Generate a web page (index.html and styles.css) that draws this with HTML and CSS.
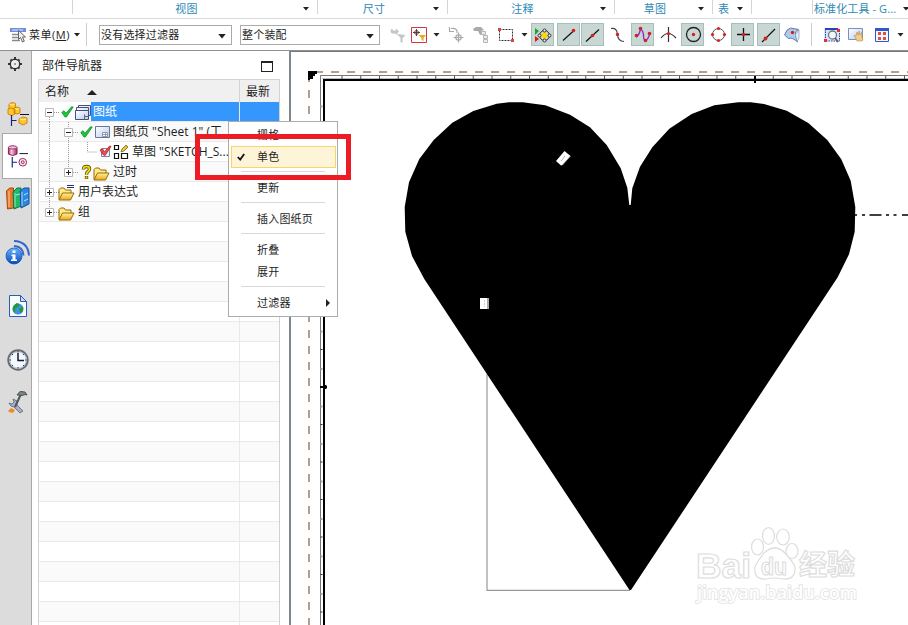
FILE: index.html
```html
<!DOCTYPE html>
<html lang="zh-CN">
<head>
<meta charset="utf-8">
<title>部件导航器</title>
<link rel="stylesheet" href="styles.css">
</head>
<body>
<svg class="defs" aria-hidden="true">
  <defs>
    <linearGradient id="gold" x1="0" y1="0" x2="0" y2="1"><stop offset="0" stop-color="#fff3a0"/><stop offset="1" stop-color="#eaa91c"/></linearGradient>
    <linearGradient id="sheetfill" x1="0" y1="0" x2="1" y2="1"><stop offset="0" stop-color="#fff"/><stop offset="1" stop-color="#b9cbee"/></linearGradient>
    <linearGradient id="blueball" x1="0" y1="0" x2="0" y2="1"><stop offset="0" stop-color="#68b5ff"/><stop offset="1" stop-color="#0847be"/></linearGradient>
    <linearGradient id="rose" x1="0" y1="0" x2="1" y2="0"><stop offset="0" stop-color="#a62a70"/><stop offset=".35" stop-color="#f5cde2"/><stop offset="1" stop-color="#a3225f"/></linearGradient>
    <symbol id="minus" viewBox="0 0 9 9"><path d="M.5.5h8v8h-8z" fill="#fff" stroke="#b8b8b8"/><path d="M2 4.500h5" stroke="#222"/></symbol>
    <symbol id="plus" viewBox="0 0 9 9"><path d="M.5.5h8v8h-8z" fill="#fff" stroke="#b8b8b8"/><path d="M2 4.500h5M4.500 2v5" stroke="#222"/></symbol>
    <symbol id="tick" viewBox="0 0 13 12"><path d="M.8 6.500 3 4.700l2 2.600L10.500.8l1.700.2-6.800 10L4 11Z" fill="#1cc83c" stroke="#07912a" stroke-width=".8"/></symbol>
    <symbol id="folder" viewBox="0 0 17 14"><path d="M1 12.500V2.500L2.500 1H6l1.500 2H13v3" fill="#ffe98a" stroke="#9a6a00"/><path d="M1 13 4.500 6h11.500L12.500 13Z" fill="url(#gold)" stroke="#9a6a00"/></symbol>
    <symbol id="caret" viewBox="0 0 6 4"><path d="M0 0h6L3 3.500Z" fill="#222"/></symbol>
  </defs>
</svg>
<div class="app">
  <nav class="ribbon">
    <div class="group"></div>
    <div class="group"><span>视图</span><svg class="caret"><use href="#caret"/></svg></div>
    <div class="group"><span>尺寸</span><svg class="caret"><use href="#caret"/></svg></div>
    <div class="group"><span>注释</span><svg class="caret"><use href="#caret"/></svg></div>
    <div class="group"><span>草图</span><svg class="caret"><use href="#caret"/></svg></div>
    <div class="group tight"><span>表</span><svg class="caret"><use href="#caret"/></svg></div>
    <div class="group"></div>
    <div class="group last"><span>标准化工具 - G...</span><svg class="caret"><use href="#caret"/></svg></div>
  </nav>

  <div class="toolbar">
    <div class="menu-button">
      <svg width="17" height="16" viewBox="10 27 17 16"><path d="M10 28h16v4H10z" fill="#6f8ee0"/><path d="M12 30h11" stroke="#dce6ff"/><path d="M12 34.500h9M12 37.500h7M12 40.500h8" stroke="#8a8a8a" stroke-width="1.400"/><path d="M18.500 30.500v9l2-2 2 4.500 1.800-.8-1.800-4.200h3Z" fill="#eee" stroke="#555" stroke-width=".9"/></svg>
      <span>菜单(<u>M</u>)</span><svg class="caret"><use href="#caret"/></svg>
    </div>
    <div class="combo first"><span>没有选择过滤器</span><svg class="caret big"><use href="#caret"/></svg></div>
    <div class="combo"><span>整个装配</span><svg class="caret big"><use href="#caret"/></svg></div>
    <svg width="29" height="30" viewBox="380 20 29 30"><path d="M392 28.500q-3 3 0 5h3.500l.5 1.500 3-3.500-3-3v2h-3ZM397 34l8.500 1-3 3.500v4.500l-2-1v-4Z" fill="#c5c5c5"/></svg>
    <svg width="21" height="30" viewBox="409 20 21 30"><path d="M411.500 27.500h15v15h-15z" fill="#fff" stroke="#cf3842"/><circle cx="416.500" cy="32.500" r="2" fill="none" stroke="#7a4b50"/><path d="M413 32.500h7M416.500 29v7" stroke="#5c3a3e"/><path d="M418.500 35h7.500l-2.500 3v3l-2-1v-2Z" fill="#f2a51b"/></svg>
    <svg width="13" height="30" viewBox="430 20 13 30"><path d="M433.500 33h6l-3 3.500Z" fill="#222"/></svg>
    <svg width="26" height="30" viewBox="443 20 26 30" fill="none" stroke="#aaa" stroke-width="1.200"><path d="M457 33v-2q-1-3.500-6-2.500M449.500 27v4.500h4.500"/><circle cx="458.500" cy="37.500" r="2.700"/><path d="M453.500 37.500h10M458.500 32.500v10"/></svg>
    <svg width="25" height="30" viewBox="469 20 25 30"><path d="m473 29 3-2h5l3 3-3 1 2 3-3 1-2-4h-4Z" fill="#aaa"/><path d="M481.500 31.500h4v3h-4zM483.500 35.500h4v3h-4zM483.500 39.500h4v3h-4z" fill="#eee" stroke="#b5b5b5"/></svg>
    <svg width="24" height="30" viewBox="494 20 24 30"><path d="M499.500 29.500h13v11h-13z" fill="none" stroke="#333" stroke-dasharray="2 1"/><path d="M498 28h3v3h-3zM511 39h3v3h-3z" fill="#e04242"/></svg>
    <svg width="13" height="30" viewBox="518 20 13 30"><path d="M521.500 33h6l-3 3.500Z" fill="#222"/></svg>
    <svg class="on" viewBox="532 25 21 21"><path d="m535 29 4 3-4 4Z" fill="#14a52b"/><path d="m535 37 4 3-4 3Z" fill="#d31e1e"/><circle cx="544.500" cy="36.500" r="5" fill="none" stroke="#333"/><path d="m544.500 32.500 4 4-4 4-4-4Z" fill="#ffd500"/><g fill="#eee" stroke="#222" stroke-width=".9"><circle cx="544.500" cy="31.500" r="1.500"/><circle cx="544.500" cy="41.500" r="1.500"/><circle cx="539.500" cy="36.500" r="1.500"/><circle cx="549.500" cy="36.500" r="1.500"/></g></svg>
    <svg class="on" viewBox="558 25 21 21"><path d="m563 41.500 11-10" stroke="#111" stroke-width="1.200"/><circle cx="573.500" cy="31.500" r="1.800" fill="#d81f1f"/></svg>
    <svg class="on" viewBox="582 25 21 21"><path d="m586 42.500 13-12" stroke="#111" stroke-width="1.200"/><circle cx="592.500" cy="36.500" r="1.800" fill="#d81f1f"/></svg>
    <svg width="25" height="30" viewBox="606 20 25 30"><path d="M611 28.500q6-1 6.500 6t6.500 7" fill="none" stroke="#444" stroke-width="1.200"/><circle cx="617.500" cy="34.500" r="1.700" fill="#d81f1f"/></svg>
    <svg class="on" viewBox="632 25 21 21"><path d="M636 38q3-1 4.500-8 3 2 3 7 0 6 4 3l3-6" fill="none" stroke="#8d2fc7" stroke-width="1.400"/><g fill="#d81f1f"><circle cx="636.500" cy="36.500" r="1.800"/><circle cx="640.500" cy="29.500" r="1.800"/><circle cx="645.500" cy="41.500" r="1.800"/><circle cx="649.500" cy="34.500" r="1.800"/></g></svg>
    <svg width="25" height="30" viewBox="656 20 25 30"><path d="M661 38q7-9 15 0M668.500 27v15" fill="none" stroke="#333" stroke-width="1.200"/><circle cx="668.500" cy="33.500" r="1.600" fill="#d81f1f"/></svg>
    <svg class="on" viewBox="682 25 21 21"><circle cx="693.500" cy="35.500" r="7" fill="none" stroke="#222" stroke-width="1.300"/><circle cx="693.500" cy="35.500" r="1.700" fill="#d81f1f"/></svg>
    <svg width="25" height="30" viewBox="706 20 25 30"><circle cx="718.500" cy="34.500" r="6" fill="none" stroke="#555"/><g fill="#d81f1f"><circle cx="718.500" cy="28.500" r="1.600"/><circle cx="718.500" cy="40.500" r="1.600"/><circle cx="712.500" cy="34.500" r="1.600"/><circle cx="724.500" cy="34.500" r="1.600"/></g></svg>
    <svg class="on" viewBox="732 25 21 21"><path d="M737 35.500h13M743.500 29v13" stroke="#111" stroke-width="1.300"/><circle cx="743.500" cy="35.500" r="1.700" fill="#d81f1f"/></svg>
    <svg class="on" viewBox="758 25 21 21"><path d="m762 43 13-13" stroke="#111" stroke-width="1.200"/><circle cx="765.500" cy="39.500" r="1.900" fill="#d81f1f"/></svg>
    <svg class="ends" width="31" height="30" viewBox="781 20 31 30"><path d="M784.500 35q2-6 6-7l8 1.500q-4 2-3 5l2 7.500q-5-5-9-3.500Z" fill="#aecbed" stroke="#5c7b9e"/><path d="m795.500 34.500 3.500-4.500v8l-2 4Z" fill="#e5f1ff" stroke="#7d98b8" stroke-width=".7"/><circle cx="792.500" cy="32.500" r="1.700" fill="#d81f1f"/></svg>
    <svg width="32" height="30" viewBox="812 20 32 30"><path d="M824 28h16v13h-16z" fill="#d8e3fa"/><path d="M825.500 29v12h14V29" fill="none" stroke="#2141b0" stroke-dasharray="1.500 1"/><path d="M825 28h13v2h-13z" fill="#2746bc"/><circle cx="832.500" cy="35" r="4" fill="#f2f8ff" stroke="#777" stroke-width="1.300"/><path d="m835 38 3 4" stroke="#666" stroke-width="2"/><path d="M837 29h3v3h-3zM824 39h3v3h-3z" fill="#df3030"/></svg>
    <svg width="25" height="30" viewBox="844 20 25 30"><path d="M848.500 28.500h14v11h-14z" fill="url(#sheetfill)" stroke="#7a91bb"/><path d="m854 35 2 1 1-4 1 3 1-4 1 4 2-3v5l1 3-1 1h-5Z" fill="#f2cd87" stroke="#b48e52" stroke-width=".6"/></svg>
    <svg width="26" height="30" viewBox="869 20 26 30"><path d="M875.500 28.500h13v13h-13z" fill="#f4f7ff" stroke="#3158ca"/><path d="M875 28h14v3h-14z" fill="#3158ca"/><path d="M878 32h3v3h-3zM883 32h3v3h-3zM878 37h3v3h-3zM883 37h3v3h-3z" fill="#e34d3d"/></svg>
    <svg width="13" height="30" viewBox="895 20 13 30"><path d="M897.500 33h6l-3 3.500Z" fill="#222"/></svg>
  </div>

  <div class="work">
    <aside class="rail">
      <svg height="28" viewBox="0 52 31 28"><circle cx="15" cy="64" r="4.700" fill="#eee" stroke="#333" stroke-width="1.400"/><path d="M15 57v3M15 68v3M8 64h3M19 64h3M10.500 59.500l1 1M18.500 67.500l1 1M10.500 68.500l1-1M18.500 60.500l1-1" stroke="#333" stroke-width="2"/><circle cx="15" cy="64" r=".8" fill="#333"/></svg>
      <svg height="53" viewBox="0 80 31 53"><g fill="#ffc52b" stroke="#c98200" stroke-width=".9"><path d="m9 104 3-1.500 3.500 1v6l-3 2-3.500-2Z"/><path d="m8 109 3-1 4 1v5l-3 1.500-4-1.500ZM14 108l3-1 3 1v5l-3 1-3-1ZM19 119l4-2 4 1v5l-4 2-4-2Z"/></g><path d="m9.500 104 3 1 2-1M15 108.500l2 1 2-1M20 119l3 1 3-1" fill="none" stroke="#fff3b0"/><path d="M11.500 115v11M11.500 120.500h5" stroke="#17227f" stroke-width="1.200"/><path d="M20 114.500h9" stroke="#111"/></svg>
      <svg class="active" height="46" viewBox="3 133 28 46"><path d="M7.500 147q4.500-3 9 0v7q-4.500 3-9 0Z" fill="url(#rose)" stroke="#8a1650"/><ellipse cx="12" cy="147" rx="4.500" ry="1.700" fill="#edc1d8" stroke="#8a1650" stroke-width=".8"/><path d="M19 153.500h9" stroke="#111"/><path d="M11.500 157v11M11.500 162.500h5" stroke="#17227f" stroke-width="1.200"/><circle cx="22.500" cy="162.500" r="4" fill="#fbeaf3" stroke="#90205c"/><circle cx="22.500" cy="162.500" r="1.500" fill="none" stroke="#90205c"/></svg>
      <svg height="49" viewBox="0 179 31 49"><path d="m6.500 191 3-3h4v20l-6 1Z" fill="#e87925" stroke="#a64710"/><path d="m13 192 4-4h4v18l-7 3Z" fill="#1cbb69" stroke="#07794a"/><path d="m20 191 4-3h5v16l-8 4Z" fill="#2988df" stroke="#174c9c"/><path d="M9 191v16M15 193v14M22 192v14" stroke="#fff" stroke-opacity=".6"/><path d="m24 195 4-2M24 201l4-2M16 195l4-1" stroke="#b7e0ff"/></svg>
      <svg height="51" viewBox="0 228 31 51"><circle cx="14" cy="256" r="8" fill="url(#blueball)" stroke="#0a4dad" stroke-width=".7"/><path d="M12.500 250.500h3v2.500h-3zM11.500 254.500h4v5h1.500v1.500h-6v-1.500h1.500v-3.500h-1z" fill="#fff"/><path d="M14 246q9 .5 9.500 9.500M14 241q14 .5 15 14.500" fill="none" stroke="#3168cb" stroke-width="2"/></svg>
      <svg height="55" viewBox="0 279 31 55"><path d="M9.500 295.500h11l6 6v15h-17Z" fill="#fafdff" stroke="#2b5cb8"/><path d="M20.500 295.500v6h6Z" fill="#c9dcf7" stroke="#2b5cb8"/><circle cx="18" cy="309" r="5.500" fill="#4091df"/><path d="m13.500 306 3-3 3 1-1 3-3 1-1 5q-3-3-1-7ZM20 308l3-1q1 4-2 6l-2-2Z" fill="#229a38"/></svg>
      <svg height="52" viewBox="0 334 31 52"><circle cx="18" cy="360" r="9.700" fill="#f3f9ff" stroke="#666c73" stroke-width="2"/><circle cx="18" cy="360" r="8.300" fill="none" stroke="#aebdd0"/><path d="M18 353v7.500h6" fill="none" stroke="#151b2c" stroke-width="1.500"/><path d="M18 351v1.500M18 367v1.500M9.500 360H11M25 360h1.500M12 354l1 1M23 365l1 1M12 366l1-1M23 355l1-1" stroke="#333"/></svg>
      <svg height="44" viewBox="0 386 31 44"><path d="m9 403 2 3 3 1 6 6 3-2-6-6v-4l-4-2 1 3-2 2Z" fill="#a6b0c1" stroke="#59647a" stroke-width=".8"/><path d="m15 407 6-13" stroke="#4e5660" stroke-width="2"/><path d="m17 395 3-3.500 5 .5 2 3-2-.5-3 1-3-.5Z" fill="#7c8684" stroke="#49514f"/><path d="m8 411 3-3 4 2-2 3-4-1Z" fill="#ef8b22"/></svg>
    </aside>

    <section class="navigator">
      <header class="title"><span>部件导航器</span><i></i></header>
      <div class="tree">
        <div class="head"><span class="name">名称 <b></b></span><span class="latest">最新</span></div>
        <div class="row">
          <svg width="52" height="20" viewBox="39 102 52 20"><path d="M49.500 117v5M54 112.500h6" stroke="#999" stroke-dasharray="1 1"/><use href="#minus" x="45" y="108" width="9" height="9"/><use href="#tick" x="61" y="106" width="13" height="12"/><g fill="url(#sheetfill)" stroke="#46507e"><path d="M78.500 105.500h12v10h-12z"/><path d="M76.500 107.500h12v10h-12z"/><path d="M75.500 110.500h13v9h-13z"/></g><path d="M84 116.500h4M84.500 114.500v5" stroke="#667"/></svg>
          <span class="label picked">图纸</span><span class="cell picked"></span>
        </div>
        <div class="row">
          <svg width="72" height="20" viewBox="39 122 72 20"><path d="M49.500 122v20M68.500 122v20M73 132.500h5" stroke="#999" stroke-dasharray="1 1"/><use href="#minus" x="64" y="128" width="9" height="9"/><use href="#tick" x="80" y="126" width="13" height="12"/><path d="M95.500 126.500h14v11h-14z" fill="url(#sheetfill)" stroke="#6377a2"/><path d="M102.500 132.500h5v4h-5zM105.500 132.500v4M102.500 134.500h5" fill="#fff" stroke="#7d8496" stroke-width=".8"/></svg>
          <span class="label">图纸页 "Sheet 1" (工</span><span class="cell"></span>
        </div>
        <div class="row">
          <svg width="91" height="20" viewBox="39 142 91 20"><path d="M49.500 142v20M68.500 142v20M87.500 142v10h9" fill="none" stroke="#999" stroke-dasharray="1 1"/><path d="M101.500 148.500h8v8h-8z" fill="#eef" stroke="#7a86a0"/><path d="m100 150 2.500-1 2 3 5-6 1.500.5-6 9-1.500-.5Z" fill="#f25050" stroke="#b81919" stroke-width=".8"/><path d="M114.500 145.500h4v4h-4zM114.500 153.500h4v5h-4zM121.500 153.500h6v5h-6z" fill="none" stroke="#111" stroke-width="1.200"/><path d="m121 152 1-3 4-4 2 2-4 4Z" fill="#f2bf36" stroke="#66501b" stroke-width=".7"/></svg>
          <span class="label">草图 "SKETCH_S...</span><span class="cell"></span>
        </div>
        <div class="row">
          <svg width="72" height="20" viewBox="39 162 72 20"><path d="M49.500 162v20M68.500 162v6M73 172.500h5" stroke="#999" stroke-dasharray="1 1"/><use href="#plus" x="64" y="168" width="9" height="9"/><path d="M83.500 169.500q0-3 3-3t3 2.500q0 1.500-1.700 2.700-1.300 1-1.300 3M86.500 176v3" fill="none" stroke="#645900" stroke-width="3.400"/><path d="M83.500 169q0-2.500 3-2.500t3 2.500q0 1.500-1.700 2.700-1.300 1-1.300 3M86.500 176.500v2" fill="none" stroke="#f3df19" stroke-width="1.700"/><use href="#folder" x="93" y="167" width="17" height="14"/></svg>
          <span class="label">过时</span><span class="cell"></span>
        </div>
        <div class="row">
          <svg width="37" height="20" viewBox="39 182 37 20"><path d="M49.500 182v20M54 192.500h5" stroke="#999" stroke-dasharray="1 1"/><use href="#plus" x="45" y="188" width="9" height="9"/><use href="#folder" x="58" y="187" width="17" height="14"/><path d="M67 185.500h7M67 187.500h7" stroke="#25317d"/></svg>
          <span class="label">用户表达式</span><span class="cell"></span>
        </div>
        <div class="row">
          <svg width="37" height="20" viewBox="39 202 37 20"><path d="M49.500 202v6M54 212.500h5" stroke="#999" stroke-dasharray="1 1"/><use href="#plus" x="45" y="208" width="9" height="9"/><use href="#folder" x="58" y="207" width="17" height="14"/></svg>
          <span class="label">组</span><span class="cell"></span>
        </div>
        <div class="row"><span class="label"></span><span class="cell"></span></div><div class="row"><span class="label"></span><span class="cell"></span></div>
        <div class="row"><span class="label"></span><span class="cell"></span></div><div class="row"><span class="label"></span><span class="cell"></span></div>
        <div class="row"><span class="label"></span><span class="cell"></span></div><div class="row"><span class="label"></span><span class="cell"></span></div>
        <div class="row"><span class="label"></span><span class="cell"></span></div><div class="row"><span class="label"></span><span class="cell"></span></div>
        <div class="row"><span class="label"></span><span class="cell"></span></div><div class="row"><span class="label"></span><span class="cell"></span></div>
        <div class="row"><span class="label"></span><span class="cell"></span></div><div class="row"><span class="label"></span><span class="cell"></span></div>
        <div class="row"><span class="label"></span><span class="cell"></span></div><div class="row"><span class="label"></span><span class="cell"></span></div>
        <div class="row"><span class="label"></span><span class="cell"></span></div><div class="row"><span class="label"></span><span class="cell"></span></div>
        <div class="row"><span class="label"></span><span class="cell"></span></div><div class="row"><span class="label"></span><span class="cell"></span></div>
        <div class="row"><span class="label"></span><span class="cell"></span></div><div class="row"><span class="label"></span><span class="cell"></span></div>
        <div class="row"><span class="label"></span><span class="cell"></span></div>
      </div>
    </section>

    <main class="drawing">
      <svg width="617" height="573" viewBox="291 52 617 573">
        <!-- sheet border -->
        <path d="M315 72h593" stroke="#b59d8f" stroke-width="2" stroke-dasharray="8 8"/>
        <path d="M309 74v551" stroke="#b59d8f" stroke-width="2" stroke-dasharray="8 8"/>
        <path d="M320.500 625V75.500H908" fill="none" stroke="#777"/>
        <path d="M322 78.500h586" stroke="#bbb"/>
        <path d="M341.500 77.500H908" stroke="#555" stroke-width="3" stroke-dasharray="1 17.750"/>
        <path d="M321.500 124v501" stroke="#333" stroke-width="2" stroke-dasharray="1 36.500"/>
        <path d="M321.500 105.500v520" stroke="#aaa" stroke-width="2" stroke-dasharray="2 35.500"/>
        <path d="M324 625V80H908" fill="none" stroke="#000" stroke-width="2"/>
        <path d="M308 71h9v3h-2v2h-2v3h-3v1h-2z"/>
        <path d="M754 76h2v7h-2zM320 386h3l1-1h2l1 1v2l-1 1h-2l-1-1h-3z"/>
        <!-- sketch -->
        <path d="M487 374v216.300M486.500 590.300H630" fill="none" stroke="#999" stroke-width="1.200"/>
        <path d="M855 215h2M862 215h3M869.500 215h12M886 215h3M893.500 215h3M902 215h6" stroke="#000" stroke-width="1.400"/>
        <path d="M404.700 207 409 182.300 419.300 159 433.700 140 452.300 122.700 473.300 111 496.700 103.700 509 102.300H522.700L545.300 105.300 570 114.700 590 127.300 606.700 145 620.700 168.300 627.300 187.700 629.300 205H630.700L632.300 188.300 640 166.700 652.300 147.300 669.300 128.700 691.700 114 714.300 105.300 738.300 102.300H750.700L764 104 786.700 110.700 808.300 123 827.300 140 841.300 159.300 850.700 180.700 855.300 207 854.700 231.700 849 254.300 837.700 277.300 631 590H629.500L424.300 279 412 256 405.300 231.700Z"/>
        <path d="m556 161 8.500-10 6 5-8 9-1.500.5Z" fill="#fff"/><path d="m562.500 165 8-9M561 161l4-5" stroke="#999" stroke-width=".8"/>
        <path d="M480 298h9v11h-9z" fill="#fff"/><path d="M487 298h2v11h-2z" fill="#aaa"/><path d="M484.500 300v7" stroke="#ccc" stroke-dasharray="2 1"/>
        <!-- watermark -->
        <g class="mark">
          <text x="696" y="578" font-size="35" textLength="55" lengthAdjust="spacingAndGlyphs">Bai</text>
          <ellipse cx="757.500" cy="547" rx="6" ry="8"/><ellipse cx="768.500" cy="536" rx="6" ry="8.300"/><ellipse cx="783" cy="537" rx="6.300" ry="8"/><ellipse cx="792" cy="551" rx="6" ry="7.500"/>
          <path d="M764 553q11-10 21 0 9 10 10 14 1 13-12 12-10-2-16 0-14 1-12-12 1-4 9-14Z"/>
          <text x="761" y="575" font-size="23" textLength="26" lengthAdjust="spacingAndGlyphs">du</text>
          <text class="cjk" x="799" y="575" font-size="28" textLength="56" lengthAdjust="spacingAndGlyphs">经验</text>
          <text class="url" x="697" y="599" font-size="18" textLength="160" lengthAdjust="spacingAndGlyphs">jingyan.baidu.com</text>
        </g>
      </svg>
    </main>
  </div>

  <div class="context-menu">
    <div class="item">栅格</div>
    <div class="item current"><svg width="8" height="8" viewBox="0 0 8 8"><path d="m.8 4 2.400 2.500L7.200 1" fill="none" stroke="#111" stroke-width="1.800"/></svg>单色</div>
    <hr>
    <div class="item">更新</div>
    <hr>
    <div class="item">插入图纸页</div>
    <hr>
    <div class="item">折叠</div>
    <div class="item">展开</div>
    <hr>
    <div class="item more">过滤器<b></b></div>
  </div>
  <div class="highlight"></div>
</div>
</body>
</html>
```
FILE: styles.css
```css
* { box-sizing: border-box; }
body { margin: 0; font: 11px/16px "Open Sans", "Noto Sans CJK SC", sans-serif; color: #1e1e1e; background: #fff; }
svg { display: block; flex: none; }
.defs { position: absolute; width: 0; height: 0; }
.app { position: relative; width: 908px; height: 625px; overflow: hidden; display: flex; flex-direction: column; }

.caret { width: 6px; height: 4px; }
.caret.big { width: 8px; height: 5px; margin-top: 3px; }

.ribbon { height: 19px; flex: none; display: grid; grid-template-columns: 73px 245px 130px 167px 98px 39px 61px 95px; border-bottom: 1px solid #d9d9d9; color: #2c88b5; }
.group { display: flex; align-items: center; height: 14px; padding: 3px 8px 0 0; border-right: 1px solid #d5d5d5; letter-spacing: .2px; white-space: nowrap; }
.group span { flex: 1; text-align: center; padding-right: 3px; }
.group.last { border: 0; padding-right: 0; padding-left: 1px; }
.group.last span { text-align: left; flex: none; width: 89px; padding: 0; letter-spacing: .1px; }

.toolbar { height: 32px; flex: none; display: grid; align-items: center; border-bottom: 1px solid #8b9298; grid-template-columns: 87px 145px 148px 29px 21px 13px 26px 25px 24px 13px 26px 24px 25px 25px 25px 25px 25px 25px 26px 24px 31px 32px 25px 26px 13px; }
.menu-button { height: 23px; display: flex; align-items: center; padding-left: 10px; border-right: 1px solid #ccc; white-space: nowrap; }
.menu-button span { width: 48px; margin-left: 2px; letter-spacing: .5px; }
.menu-button .caret { margin-left: -3px; }
.combo { margin-left: 8px; height: 20px; border: 1px solid #ababab; display: flex; align-items: center; justify-content: space-between; padding: 0 5px 0 1px; letter-spacing: .2px; }
.combo.first { margin-left: 12px; }
.on { width: 23px; height: 23px; background: #c8d7d4; border: 1px solid #a7bfba; }
.ends { background: linear-gradient(#ccc, #ccc) right 0 center / 1px 23px no-repeat; }

.work { flex: 1; display: flex; min-height: 0; }
.rail { width: 32px; flex: none; background: #dcdcdc; border-right: 1px solid #a8a8a8; padding-top: 1px; }
.rail svg { width: 31px; }
.rail .active { width: 30px; margin-left: 2px; background: #fff; border: 1px solid #a8a8a8; border-right: 0; }

.navigator { width: 257px; flex: none; padding: 0 9px 0 6px; font-size: 12px; }
.title { height: 28px; display: flex; align-items: center; justify-content: space-between; padding: 1px 7px 0 4px; }
.title i { width: 12px; height: 11px; border: 1px solid #222; border-top-width: 2px; margin-top: 2px; }
.tree { height: 546px; border: 1px solid #d2d2d2; border-bottom: 0; width: 242px; overflow: hidden; }
.head { height: 22px; background: #f0f0f0; display: flex; align-items: center; }
.name { width: 201px; padding: 2px 0 0 6px; border-right: 1px solid #d2d2d2; line-height: 20px; display: flex; align-items: center; }
.name b { margin-left: 18px; border: 5px solid transparent; border-top: 0; border-bottom-color: #222; }
.latest { flex: 1; padding: 2px 0 0 6px; }
.row { height: 20px; display: flex; background: #fff; border-bottom: 1px solid #e9e9e9; }
.row:nth-child(odd) { background: #fafafa; }
.row svg { height: 20px; }
.label { flex: 1; padding-left: 2px; line-height: 19px; white-space: nowrap; border-right: 1px solid #e9e9e9; overflow: hidden; }
.cell { width: 39px; }
.picked { background: #3397fd; color: #fff; }

.drawing { flex: 1; border-left: 2px solid #7f868c; border-top: 1px solid #777; overflow: hidden; }
.mark { fill: #fff; stroke: #ddd; stroke-width: 1.2; font-family: "Liberation Sans", sans-serif; font-weight: bold; }
.mark .cjk { font-family: "Noto Sans CJK SC", sans-serif; }
.mark .url { font-family: "Open Sans", sans-serif; font-weight: 600; stroke: #e2e2e2; stroke-width: 1.6; paint-order: stroke; }

.context-menu { position: absolute; left: 228px; top: 121px; width: 110px; height: 196px; background: #fff; border: 1px solid #acacac; padding: 2px; letter-spacing: .2px; }
.item { height: 22px; display: flex; align-items: center; padding-left: 26px; }
.item.current { width: 105px; background: #fef4d8; border: 1px solid #f9d36b; padding-left: 5px; }
.item.current svg { margin-right: 12px; }
.item.more b { margin-left: 35px; border: 4px solid transparent; border-right: 0; border-left-color: #222; }
.context-menu hr { width: 84px; height: 1px; margin: 3px 0 5px 10px; border: 0; background: #d8d8d8; }
.highlight { position: absolute; left: 195px; top: 134px; width: 156px; height: 46px; border: 5px solid #ed1c24; }
```
